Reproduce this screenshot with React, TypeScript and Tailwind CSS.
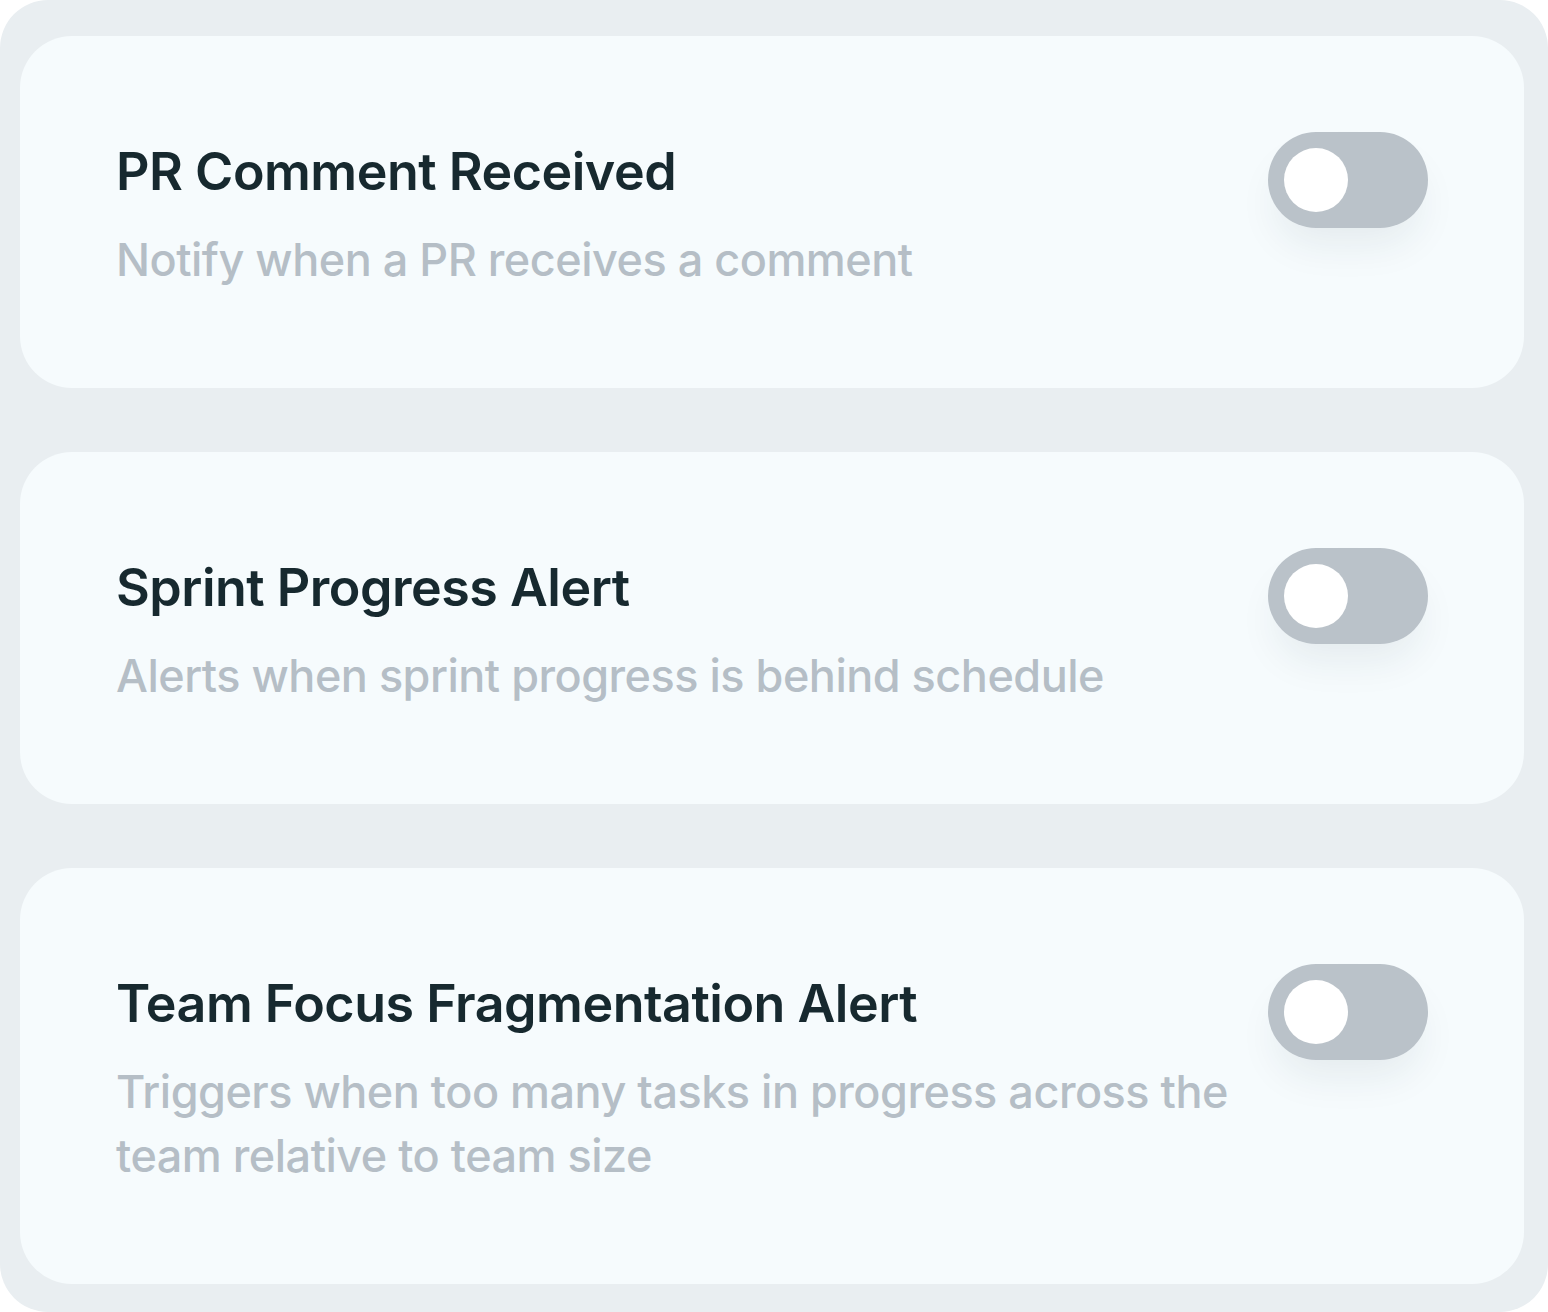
const items = [
  { title: 'PR Comment Received', desc: 'Notify when a PR receives a comment' },
  { title: 'Sprint Progress Alert', desc: 'Alerts when sprint progress is behind schedule' },
  {
    title: 'Team Focus Fragmentation Alert',
    desc: 'Triggers when too many tasks in progress across the team relative to team size',
  },
];

function Toggle() {
  return (
    <button
      type="button"
      className="shrink-0 w-[160px] h-[96px] rounded-full bg-[#bac2c9] p-[16px] flex items-center shadow-[0_24px_40px_-8px_rgba(30,50,70,0.08)]"
    >
      <span className="block w-[64px] h-[64px] rounded-full bg-white" />
    </button>
  );
}

export default function App() {
  return (
    <div
      className="w-[1548px] h-[1312px] bg-[#e9eef1] rounded-[48px] pl-[20px] pr-[24px] pt-[36px] pb-[28px] flex flex-col gap-[64px]"
      style={{ fontFamily: 'Inter, "Noto Sans", sans-serif' }}
    >
      {items.map((item) => (
        <div key={item.title} className="bg-[#f6fbfd] rounded-[52px] p-[96px] flex gap-[20px]">
          <div className="flex-1 flex flex-col gap-[16px]">
            <div className="text-[52px] leading-[80px] font-semibold text-[#17292f] tracking-[-0.5px]">
              {item.title}
            </div>
            <div className="text-[45px] leading-[64px] font-medium text-[#b5bec6] tracking-[-0.5px]">
              {item.desc}
            </div>
          </div>
          <Toggle />
        </div>
      ))}
    </div>
  );
}
